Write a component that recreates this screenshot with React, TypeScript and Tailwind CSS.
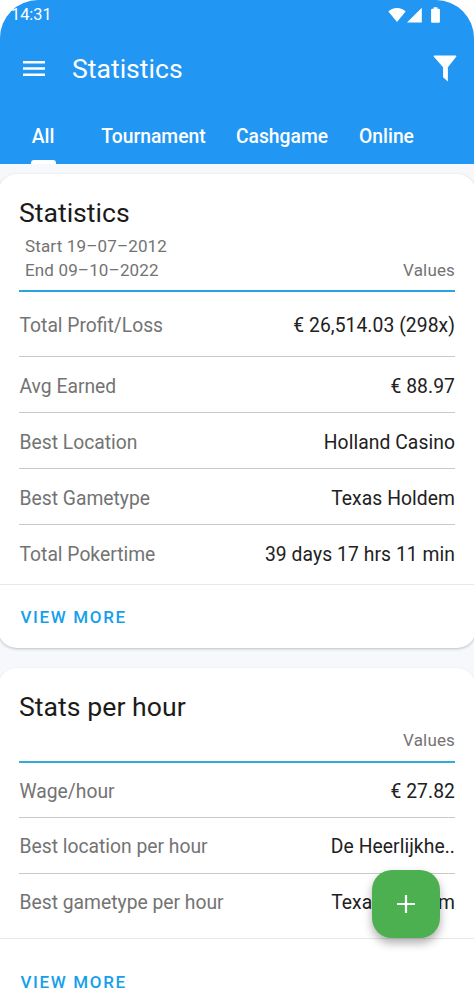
const tabs = [
  { label: "All", className: "w-[86px]" },
  { label: "Tournament", className: "w-[135px]" },
  { label: "Cashgame", className: "w-[122px]" },
  { label: "Online", className: "w-[87px]" },
];

const statistics = [
  { label: "Total Profit/Loss", value: "€ 26,514.03 (298x)", className: "h-[65px] border-b" },
  { label: "Avg Earned", value: "€ 88.97", className: "h-14 border-b" },
  { label: "Best Location", value: "Holland Casino", className: "h-14 border-b" },
  { label: "Best Gametype", value: "Texas Holdem", className: "h-14 border-b" },
  { label: "Total Pokertime", value: "39 days 17 hrs 11 min", className: "h-[55px]" },
];

const hourly = [
  { label: "Wage/hour", value: "€ 27.82", className: "h-[55px] border-b" },
  { label: "Best location per hour", value: "De Heerlijkhe..", className: "h-14 border-b" },
  { label: "Best gametype per hour", value: "Texas Holdem", className: "h-[55px]" },
];

type Row = { label: string; value: string; className: string };

function StatRows({ rows, className }: { rows: Row[]; className: string }) {
  return (
    <div className={`px-[21px] ${className}`}>
      {rows.map((row) => (
        <div
          key={row.label}
          className={`flex items-center justify-between border-[#c9c9c9] pt-[5px] text-[19.3px] ${row.className}`}
        >
          <span className="pl-[0.5px] text-[#737373]">{row.label}</span>
          <span className="tracking-[0.07px] text-[#212121]">{row.value}</span>
        </div>
      ))}
    </div>
  );
}

function ViewMore({ className }: { className: string }) {
  return (
    <div className={`flex items-center border-t border-[#e8e8e8] px-[22.5px] ${className}`}>
      <button className="text-[17px] font-medium tracking-[1.65px] text-[#17a0ea]">VIEW MORE</button>
    </div>
  );
}

function StatusBar() {
  return (
    <div className="flex h-[30px] items-center justify-between pl-[11px] pr-[34px] text-[16.3px]">
      <span>14:31</span>
      <div className="flex items-center pb-px">
        <svg className="h-[16px] w-[18px]" viewBox="0 0 19 16" fill="currentColor">
          <path d="M9.5 15.5 .4 4.3C2.5 2 5.8.6 9.5.6s7 1.4 9.1 3.7z" />
        </svg>
        <svg className="ml-[1px] h-[16px] w-[15px]" viewBox="0 0 15 16" fill="currentColor">
          <path d="M0 15.6h14.8V.7z" />
        </svg>
        <svg className="ml-[9px] h-[16px] w-[9px]" viewBox="0 0 9 16" fill="currentColor">
          <path d="M2.6.2h3.8v1.5h1.5q1 0 1 1v12q0 1-1 1H1.1q-1 0-1-1v-12q0-1 1-1h1.5z" />
        </svg>
      </div>
    </div>
  );
}

export default function App() {
  return (
    <div className="relative h-[1001px] w-full overflow-hidden bg-[#f7f8fb] font-['Roboto',sans-serif]">
      <div className="bg-white">
        <header className="flex h-[164px] flex-col rounded-t-[38px] bg-[#2296f3] text-white">
          <StatusBar />
          <div className="flex h-[76px] items-center pl-[22.5px] pr-[17px]">
            <svg className="h-[15px] w-[22px]" viewBox="0 0 22 15" fill="currentColor">
              <path d="M0 0h22v2.4H0zM0 6.3h22v2.4H0zM0 12.6h22V15H0z" />
            </svg>
            <h1 className="ml-[27.5px] pt-0.5 text-[26.6px]">Statistics</h1>
            <svg className="ml-auto h-[27px] w-[24px]" viewBox="0 0 24 28" fill="currentColor">
              <path d="M1.2.5h21.6q1.2 0 1 1.1L15 12.7V27.5l-5-4.3V12.700L.2 1.6Q0 .5 1.2.5z" />
            </svg>
          </div>
          <nav className="flex h-[58px] text-[19.3px] font-medium">
            {tabs.map((tab, index) => (
              <button key={tab.label} className={`relative h-full shrink-0 pt-1 text-center ${tab.className}`}>
                {tab.label}
                {index === 0 && (
                  <span className="absolute bottom-0 left-[31px] h-1 w-[25px] rounded-t-[3px] bg-white" />
                )}
              </button>
            ))}
          </nav>
        </header>
      </div>

      <main className="-mx-0.5 flex flex-col gap-[19.5px] pt-[10px]">
        <section className="rounded-[19px] bg-white shadow-[0_1px_3px_rgba(0,0,0,0.24)]">
          <div className="mx-[21px] h-[118px] border-b-2 border-[#28a4e2] pt-[22px]">
            <h2 className="text-[26.6px] leading-[34px] text-[#1b1b1b]">Statistics</h2>
            <div className="flex items-end justify-between pt-[5px] text-[17px] leading-[23.5px] tracking-[0.15px] text-[#737373]">
              <p className="pl-1.5">
                Start 19–07–2012
                <br />
                End 09–10–2022
              </p>
              <span>Values</span>
            </div>
          </div>
          <StatRows rows={statistics} className="pb-1" />
          <ViewMore className="h-16 pt-[3px]" />
        </section>

        <section className="rounded-[19px] bg-white shadow-[0_1px_3px_rgba(0,0,0,0.14)]">
          <div className="mx-[21px] h-[95px] border-b-2 border-[#35aadc] pt-[22px]">
            <h2 className="text-[26.6px] leading-[34px] tracking-[0.05px] text-[#1b1b1b]">Stats per hour</h2>
            <div className="pt-[5px] text-right text-[17px] leading-[23.5px] tracking-[0.15px] text-[#737373]">
              Values
            </div>
          </div>
          <StatRows rows={hourly} className="pb-[9px]" />
          <ViewMore className="h-[73px] pt-[17px]" />
        </section>
      </main>

      <button
        aria-label="Add session"
        className="absolute bottom-[63px] right-[34px] flex size-[68px] items-center justify-center rounded-[20px] bg-[#4caf50] text-white shadow-[0_5px_10px_rgba(0,0,0,0.32)]"
      >
        <svg className="size-[18px]" viewBox="0 0 18 18" fill="none" stroke="currentColor" strokeWidth="2.2">
          <path d="M9 0v18M0 9h18" />
        </svg>
      </button>
    </div>
  );
}
